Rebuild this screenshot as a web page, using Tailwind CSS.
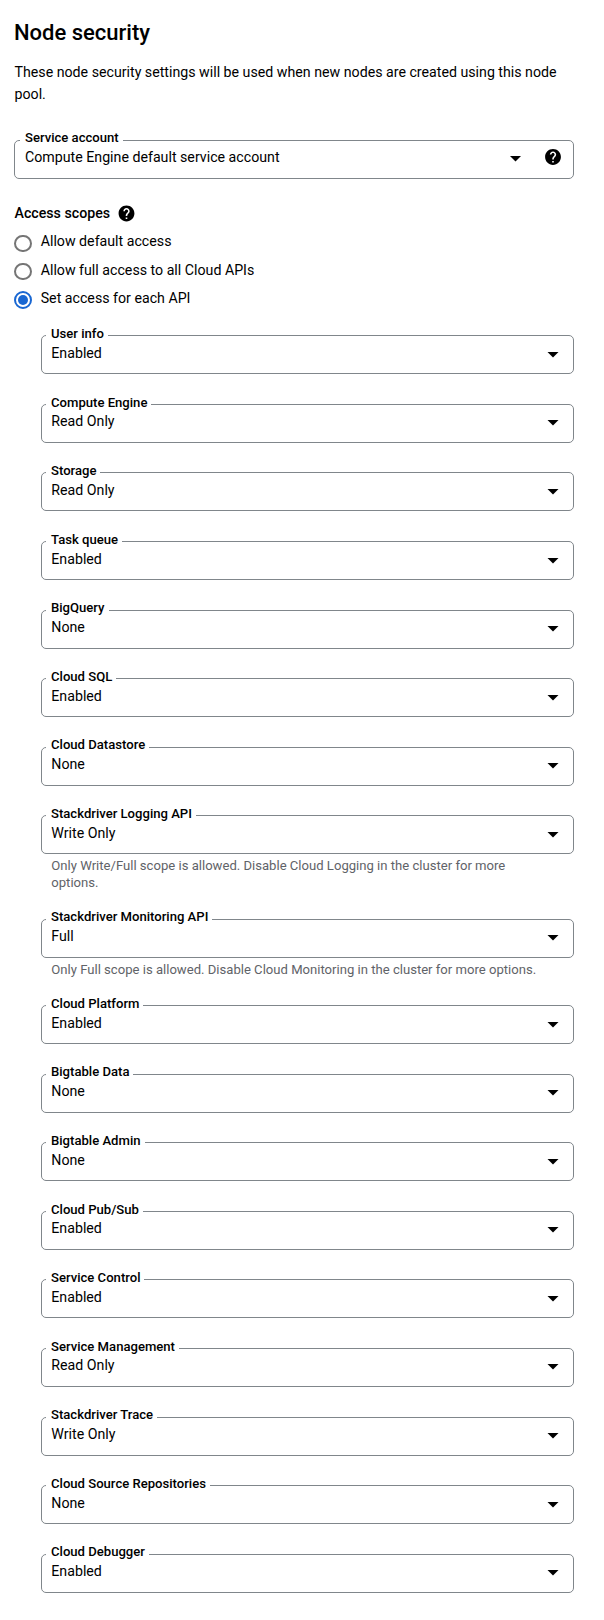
<!DOCTYPE html>
<html lang="en">
<head>
<meta charset="utf-8">
<title>Node security</title>
<script src="https://cdn.jsdelivr.net/npm/@tailwindcss/browser@4"></script>
</head>
<body class="bg-white font-[Roboto,sans-serif] text-black">
<main class="w-[574px] pl-[14px]">
  <h1 class="pt-[19px] text-[22px] leading-[28px] font-medium">Node security</h1>
  <p class="mt-[14px] pl-[0.5px] text-[14.2px] leading-[22px]">These node security settings will be used when new nodes are created using this node pool.</p>

  <div class="relative mt-[35px] flex h-[39px] items-start rounded-[5px] border border-[#80868b] pt-[7px] pl-[10px]">
    <span class="absolute -top-[12px] left-[5px] bg-white pr-[4px] pl-[5px] text-[13.1px] leading-[18px] font-medium whitespace-nowrap">Service account</span>
    <span class="flex-1 text-[14.2px] leading-[18px]">Compute Engine default service account</span>
    <svg class="mt-[8px] mr-[22px] h-[5.5px] w-[11px]" viewBox="0 0 10 5"><path d="M0 0h10L5 5z"/></svg>
    <svg class="-mt-[1px] mr-[10px] size-[20px]" viewBox="-0.63 -0.63 25.26 25.26"><path d="M12 2C6.48 2 2 6.48 2 12s4.48 10 10 10 10-4.48 10-10S17.52 2 12 2zm1 17h-2v-2h2v2zm2.07-7.75l-.9.92C13.45 12.9 13 13.5 13 15h-2v-.5c0-1.1.45-2.1 1.17-2.83l1.24-1.26c.37-.36.59-.86.59-1.41 0-1.1-.9-2-2-2s-2 .9-2 2H8c0-2.21 1.79-4 4-4s4 1.79 4 4c0 .88-.36 1.68-.93 2.25z"/></svg>
  </div>

  <div class="mt-[24px] flex h-[20px] items-center gap-[7px]">
    <h2 class="pl-[0.5px] text-[14.2px] leading-[20px] font-medium">Access scopes</h2>
    <svg class="size-[19px]" viewBox="0 0 24 24"><path d="M12 2C6.48 2 2 6.48 2 12s4.48 10 10 10 10-4.48 10-10S17.52 2 12 2zm1 17h-2v-2h2v2zm2.07-7.75l-.9.92C13.45 12.9 13 13.5 13 15h-2v-.5c0-1.1.45-2.1 1.17-2.83l1.24-1.26c.37-.36.59-.86.59-1.41 0-1.1-.9-2-2-2s-2 .9-2 2H8c0-2.21 1.79-4 4-4s4 1.79 4 4c0 .88-.36 1.68-.93 2.25z"/></svg>
  </div>

  <div class="mt-[7px] flex h-[86px] flex-col">
    <label class="flex h-[28.5px] items-start gap-[8.7px]">
      <span class="mt-[5px] h-[17px] w-[18px] rounded-full border-2 border-[#757575]"></span>
      <span class="text-[14.2px] leading-[22px]">Allow default access</span>
    </label>
    <label class="flex h-[28.5px] items-start gap-[8.7px]">
      <span class="mt-[4.5px] h-[17px] w-[18px] rounded-full border-2 border-[#757575]"></span>
      <span class="text-[14.2px] leading-[22px]">Allow full access to all Cloud APIs</span>
    </label>
    <label class="flex h-[28.5px] items-start gap-[8.7px]">
      <span class="mt-[4px] flex size-[18px] items-center justify-center rounded-full border-2 border-[#1967d2]"><span class="size-[10px] rounded-full bg-[#1967d2]"></span></span>
      <span class="text-[14.2px] leading-[22px]">Set access for each API</span>
    </label>
  </div>

  <div class="mt-[19.3px] ml-[27px]" id="scopes"></div>
</main>
<script>
const scopes = [
  ['User info', 'Enabled'], ['Compute Engine', 'Read Only'], ['Storage', 'Read Only'],
  ['Task queue', 'Enabled'], ['BigQuery', 'None'], ['Cloud SQL', 'Enabled'],
  ['Cloud Datastore', 'None'],
  ['Stackdriver Logging API', 'Write Only', 'Only Write/Full scope is allowed. Disable Cloud Logging in the cluster for more options.', 'h-[103.44px]'],
  ['Stackdriver Monitoring API', 'Full', 'Only Full scope is allowed. Disable Cloud Monitoring in the cluster for more options.', 'h-[86.3px]'],
  ['Cloud Platform', 'Enabled'], ['Bigtable Data', 'None'], ['Bigtable Admin', 'None'],
  ['Cloud Pub/Sub', 'Enabled'], ['Service Control', 'Enabled'], ['Service Management', 'Read Only'],
  ['Stackdriver Trace', 'Write Only'], ['Cloud Source Repositories', 'None'], ['Cloud Debugger', 'Enabled'],
];
document.getElementById('scopes').innerHTML = scopes.map(([label, value, hint, height]) => `
  <div class="${height || 'h-[68.58px]'}">
    <div class="relative flex h-[39px] items-start rounded-[5px] border border-[#80868b] pt-[7.5px] pl-[9.3px]">
      <span class="absolute -top-[11.3px] left-[4px] bg-white pr-[4px] pl-[5px] text-[13.1px] leading-[18px] font-medium whitespace-nowrap">${label}</span>
      <span class="flex-1 text-[14.2px] leading-[18px]">${value}</span>
      <svg class="mt-[8px] mr-[14px] h-[6px] w-[12px]" viewBox="0 0 12 6"><path d="M.5 0h11L6 5.6z"/></svg>
    </div>
    ${hint ? `<p class="mt-[2.8px] pr-[34px] pl-[10.3px] text-[13.1px] leading-[17.14px] text-[#5f6368]">${hint}</p>` : ''}
  </div>`).join('');
</script>
</body>
</html>
